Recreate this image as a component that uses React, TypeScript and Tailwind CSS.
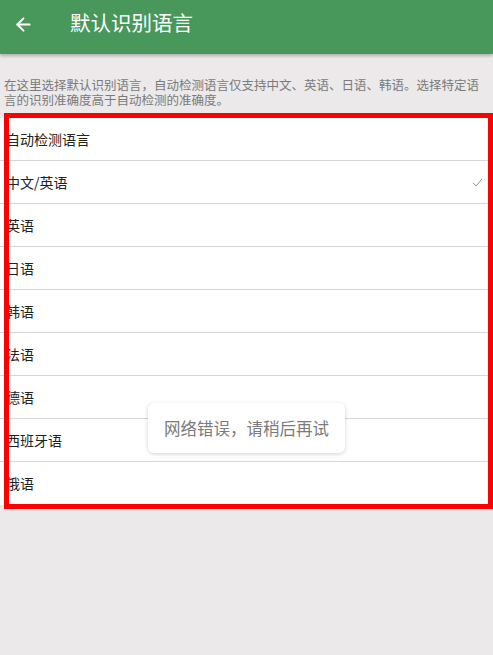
import { ArrowLeft } from "lucide-react";

const languages = [
  "自动检测语言",
  "中文/英语",
  "英语",
  "日语",
  "韩语",
  "法语",
  "德语",
  "西班牙语",
  "俄语",
];

export default function App() {
  return (
    <div
      className="relative min-h-[655px] bg-[#ebe9ea]"
      style={{ fontFamily: '"Noto Sans CJK SC", "Noto Sans", sans-serif' }}
    >
      <header className="h-[54px] bg-[#47985a] flex items-center shadow-[0_2px_3px_rgba(0,0,0,0.25)]">
        <ArrowLeft className="ml-[13px] -mt-[6px] w-[21px] h-[21px] text-white" strokeWidth={2.2} />
        <h1 className="ml-[36px] text-[20.5px] text-white leading-none -mt-[10px]">默认识别语言</h1>
      </header>

      <p className="px-[4px] pt-[23px] text-[12.5px] leading-[15px] text-[#7a7a7a]">
        在这里选择默认识别语言，自动检测语言仅支持中文、英语、日语、韩语。选择特定语言的识别准确度高于自动检测的准确度。
      </p>

      <ul className="mt-[11px] bg-white">
        {languages.map((lang, i) => (
          <li
            key={lang}
            className={
              "h-[43px] flex items-center justify-between pl-[6px] pr-[9px] text-[14px] text-[#222] " +
              (i < languages.length - 1 ? "border-b border-[#d6d6d6]" : "")
            }
          >
            <span>{lang}</span>
            {i === 1 && (
              <svg width="11" height="9" viewBox="0 0 12 10" fill="none" className="mr-[1px]">
                <path d="M1 5.5 L4.5 9 L11 1" stroke="#6f8a82" strokeWidth="1" />
              </svg>
            )}
          </li>
        ))}
      </ul>

      {/* red annotation frame */}
      <div className="absolute left-[4px] top-[113px] w-[489px] h-[396px] border-[5px] border-[#ff0000] pointer-events-none" />

      {/* toast */}
      <div className="absolute left-[148px] top-[403px] w-[197px] h-[50px] bg-white rounded-[6px] shadow-[0_1px_4px_rgba(0,0,0,0.18)] flex items-center justify-center">
        <span className="text-[16.5px] text-[#7b7b7b]">网络错误，请稍后再试</span>
      </div>
    </div>
  );
}
